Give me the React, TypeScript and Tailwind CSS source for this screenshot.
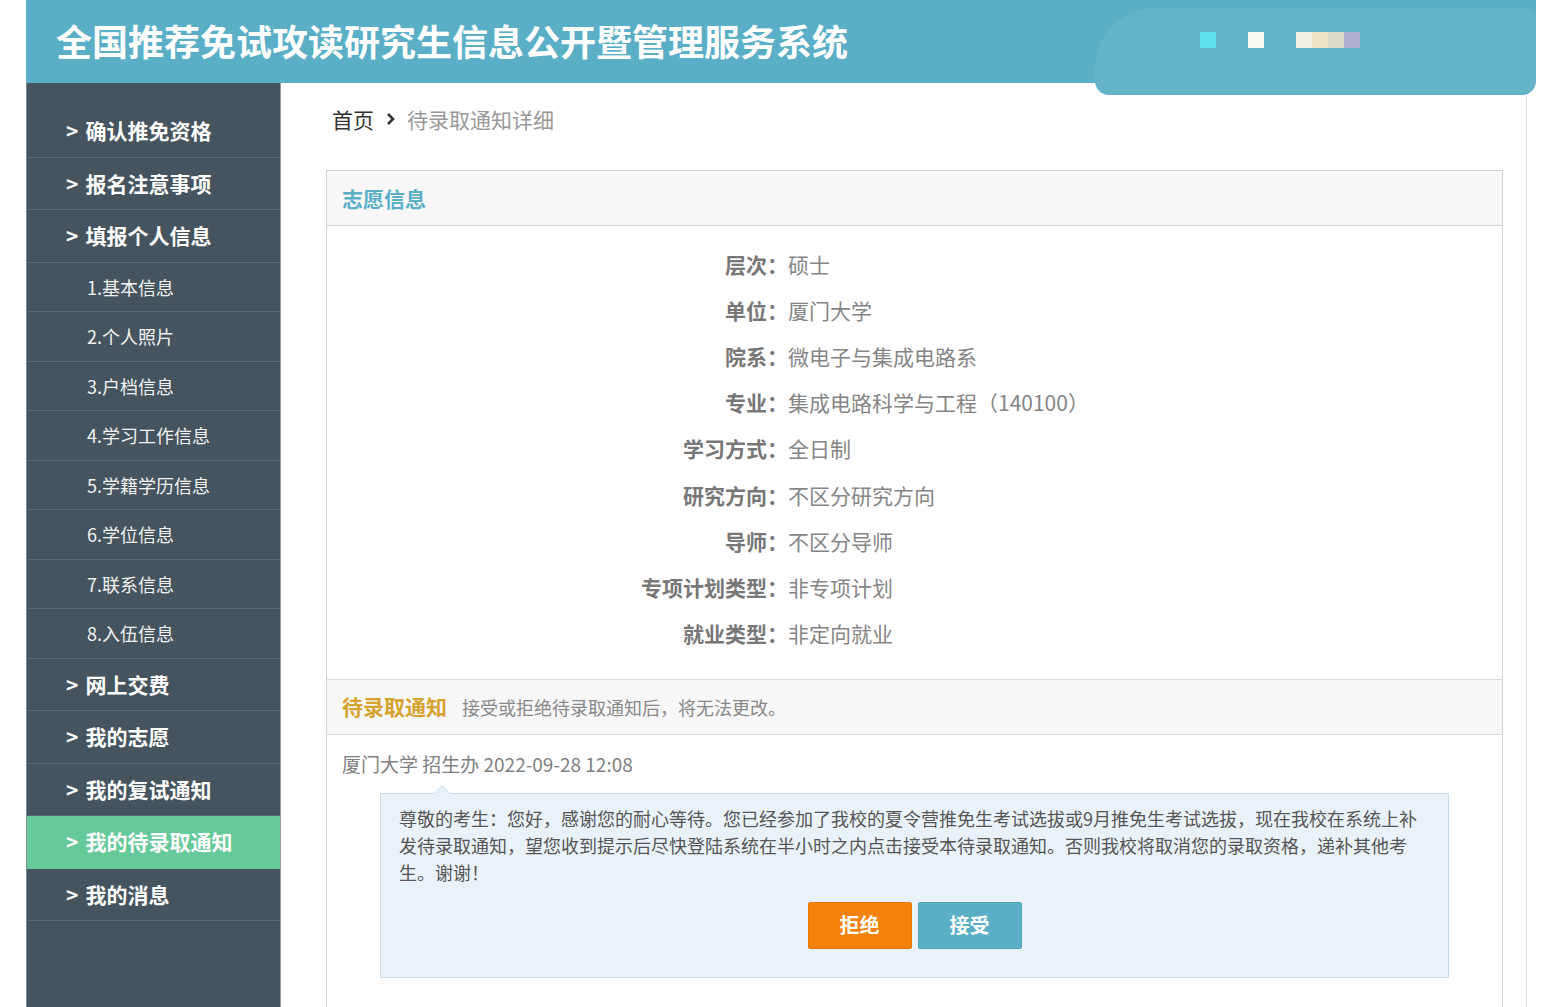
import React from "react";

const mainItemsTop = ["确认推免资格", "报名注意事项", "填报个人信息"];
const subItems = ["1.基本信息", "2.个人照片", "3.户档信息", "4.学习工作信息", "5.学籍学历信息", "6.学位信息", "7.联系信息", "8.入伍信息"];
const mainItemsBottom = [
  { t: "网上交费", active: false },
  { t: "我的志愿", active: false },
  { t: "我的复试通知", active: false },
  { t: "我的待录取通知", active: true },
  { t: "我的消息", active: false },
];

const rows: [string, string][] = [
  ["层次", "硕士"],
  ["单位", "厦门大学"],
  ["院系", "微电子与集成电路系"],
  ["专业", "集成电路科学与工程（140100）"],
  ["学习方式", "全日制"],
  ["研究方向", "不区分研究方向"],
  ["导师", "不区分导师"],
  ["专项计划类型", "非专项计划"],
  ["就业类型", "非定向就业"],
];

function MainItem({ t, active }: { t: string; active?: boolean }) {
  return (
    <div
      className={`h-[52.5px] flex items-center pl-[39px] border-b border-[#5b6a73] ${
        active ? "bg-[#66c99a] border-[#66c99a]" : ""
      }`}
    >
      <span className="text-white font-bold text-[21px] leading-none">&gt;</span>
      <span className="ml-[7px] text-white font-bold text-[21px] leading-none">{t}</span>
    </div>
  );
}

function SubItem({ t }: { t: string }) {
  return (
    <div className="h-[49.5px] flex items-center pl-[60px] border-b border-[#5b6a73]">
      <span className="text-[#f2f2f2] text-[18px] leading-none">{t}</span>
    </div>
  );
}

export default function App() {
  return (
    <div className="w-[1549px] h-[1007px] overflow-hidden bg-white relative font-['Microsoft_YaHei','Noto_Sans_CJK_SC',sans-serif]">
      {/* Header */}
      <header className="ml-[26px] w-[1510px] h-[83px] bg-[#5aafc7] relative flex items-center">
        <h1 className="pl-[30px] text-white font-bold text-[36px] leading-none -mt-[4px]">
          全国推荐免试攻读研究生信息公开暨管理服务系统
        </h1>
        <div className="absolute left-[1069px] top-[8px] w-[441px] h-[87px] bg-[#63b3c9] rounded-tl-[60px] rounded-bl-[14px] rounded-br-[14px] rounded-tr-[8px] z-10">
          <div className="absolute left-[105px] top-[24px] flex">
            <div className="w-[16px] h-[16px] bg-[#5fe0f0]" />
            <div className="w-[16px] h-[16px] bg-[#fbfaf1] ml-[32px]" />
            <div className="w-[16px] h-[16px] bg-[#f3efe2] ml-[32px]" />
            <div className="w-[16px] h-[16px] bg-[#ebe4c6]" />
            <div className="w-[16px] h-[16px] bg-[#dcdac8]" />
            <div className="w-[16px] h-[16px] bg-[#afb1cf]" />
          </div>
        </div>
      </header>

      <div className="flex">
        {/* Sidebar */}
        <aside className="ml-[26px] w-[255px] h-[924px] bg-[#45545e] border-l border-[#7d8a92] border-r border-r-[#8f9aa1] pt-[22px]">
          {mainItemsTop.map((t) => (
            <MainItem key={t} t={t} />
          ))}
          {subItems.map((t) => (
            <SubItem key={t} t={t} />
          ))}
          {mainItemsBottom.map((m) => (
            <MainItem key={m.t} t={m.t} active={m.active} />
          ))}
        </aside>

        {/* Main */}
        <main className="w-[1246px] h-[924px] border-r border-[#dcdcdc] pl-[45px] pr-[23px]">
          <div className="h-[87px] flex items-center pl-[6px] pb-[15px]">
            <span className="text-[21px] text-[#333] leading-none">首页</span>
            <svg className="ml-[12px] mr-[12px]" width="9" height="14" viewBox="0 0 9 14">
              <path d="M2 2 L7 7 L2 12" fill="none" stroke="#333" strokeWidth="2.6" />
            </svg>
            <span className="text-[21px] text-[#999] leading-none">待录取通知详细</span>
          </div>

          <section className="border border-[#d2d2d2] h-[900px]">
            <div className="h-[55px] bg-[#f7f7f7] border-b border-[#d2d2d2] flex items-center pl-[15px]">
              <span className="text-[21px] font-bold text-[#5aafc7] leading-none">志愿信息</span>
            </div>
            <div className="pt-[15px] pb-[22px]">
              {rows.map(([k, v]) => (
                <div key={k} className="h-[46.2px] flex items-center">
                  <span className="w-[461px] text-right text-[21px] font-bold text-[#777] leading-none">{k}：</span>
                  <span className="text-[21px] text-[#858585] leading-none">{v}</span>
                </div>
              ))}
            </div>
            <div className="h-[56px] bg-[#f7f7f7] border-y border-[#d9d9d9] flex items-center pl-[15px]">
              <span className="text-[21px] font-bold text-[#d6a32e] leading-none">待录取通知</span>
              <span className="ml-[15px] text-[18px] text-[#888] leading-none">接受或拒绝待录取通知后，将无法更改。</span>
            </div>
            <div className="pt-[17px]">
              <div className="pl-[15px] text-[19px] text-[#808080] leading-[24px]">厦门大学 招生办 2022-09-28 12:08</div>
              <div className="mx-[53px] mt-[17px] relative border border-[#c7dce8] bg-[#e9f2f9] pt-[11px] pb-[28px] px-[18px]">
                <div className="absolute -top-[9px] left-[52px] w-0 h-0 border-l-[9px] border-r-[9px] border-b-[9px] border-l-transparent border-r-transparent border-b-[#c7dce8]" />
                <div className="absolute -top-[8px] left-[53px] w-0 h-0 border-l-[8px] border-r-[8px] border-b-[8px] border-l-transparent border-r-transparent border-b-[#e9f2f9]" />
                <p className="text-[18px] leading-[27px] text-[#555]">
                  尊敬的考生：您好，感谢您的耐心等待。您已经参加了我校的夏令营推免生考试选拔或9月推免生考试选拔，现在我校在系统上补发待录取通知，望您收到提示后尽快登陆系统在半小时之内点击接受本待录取通知。否则我校将取消您的录取资格，递补其他考生。谢谢！
                </p>
                <div className="mt-[16px] flex justify-center gap-[6px]">
                  <button className="w-[104px] h-[47px] bg-[#f5820b] border border-[#e8770a] rounded-[2px] text-white font-bold text-[20px]">
                    拒绝
                  </button>
                  <button className="w-[104px] h-[47px] bg-[#5aafc7] border border-[#4fa3ba] rounded-[2px] text-white font-bold text-[20px]">
                    接受
                  </button>
                </div>
              </div>
            </div>
          </section>
        </main>
      </div>
    </div>
  );
}
